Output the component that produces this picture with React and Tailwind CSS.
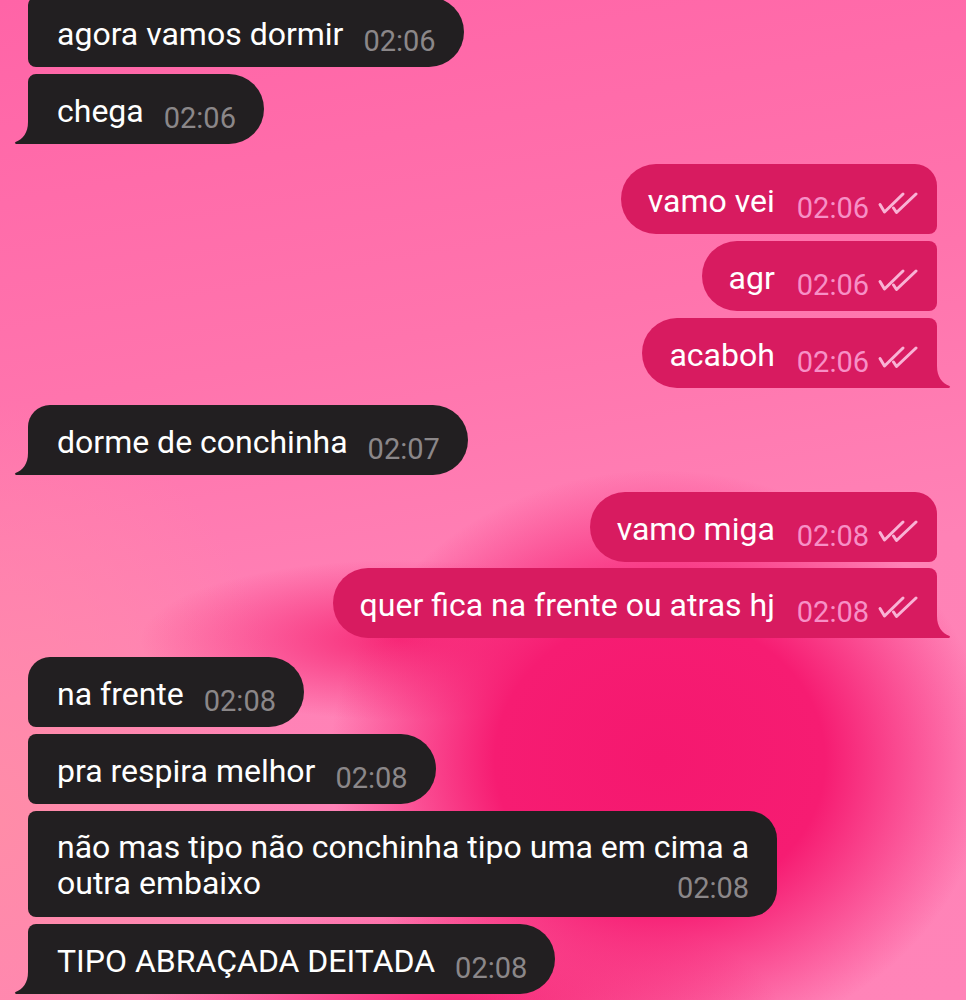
import React from "react";

const FONT = { fontFamily: "Roboto, 'Noto Sans', sans-serif" };

function Ticks() {
  return (
    <svg width="42" height="24" viewBox="0 0 42 24" className="shrink-0 translate-y-[4px]" fill="none">
      <path d="M4 13.5 L8.5 21 L27 3" stroke="#f9b3d5" strokeWidth="3" strokeLinecap="round" strokeLinejoin="round" />
      <path d="M17.5 17 L20.5 21.5 L40 3" stroke="#f9b3d5" strokeWidth="3" strokeLinecap="round" strokeLinejoin="round" />
    </svg>
  );
}

function Tail({ out, color }) {
  return (
    <svg
      width="16"
      height="22"
      viewBox="0 0 16 22"
      className={out ? "absolute -right-[14px] bottom-0 -scale-x-100" : "absolute -left-[14px] bottom-0"}
    >
      <path d="M14 0 C14 11 9 17 1.5 20 Q0 21 2 22 L16 22 L16 0 Z" fill={color} />
    </svg>
  );
}

function Bubble({ text, time, out, first, tail, className = "" }) {
  const bg = out ? "bg-[#d81b60]" : "bg-[#221f21]";
  const shape = out
    ? `rounded-l-[35px] ${first ? "rounded-tr-[22px]" : "rounded-tr-[8px]"} ${tail ? "rounded-br-none" : "rounded-br-[8px]"}`
    : `rounded-r-[35px] ${first ? "rounded-tl-[22px]" : "rounded-tl-[8px]"} ${tail ? "rounded-bl-none" : "rounded-bl-[8px]"}`;
  return (
    <div className={`flex ${out ? "justify-end" : "justify-start"} ${className}`}>
      <div className={`relative ${bg} ${shape} flex items-center h-[70px] ${out ? "pl-[27px] pr-[19px]" : "pl-[29px] pr-[28px]"}`}>
        <div className="flex items-baseline translate-y-[2px]">
          <span className="text-[32px] leading-[36px] text-white whitespace-nowrap">{text}</span>
          <span
            className={`text-[29px] leading-[36px] translate-y-[6px] whitespace-nowrap ${out ? "ml-[22px] text-[#f790c6]" : "ml-[20px] text-[#8b8789]"}`}
          >
            {time}
          </span>
        </div>
        {out && <div className="ml-[7px]"><Ticks /></div>}
        {tail && <Tail out={out} color={out ? "#d81b60" : "#221f21"} />}
      </div>
    </div>
  );
}

export default function App() {
  return (
    <div
      className="relative w-[966px] h-[1000px] overflow-hidden bg-[radial-gradient(ellipse_330px_290px_at_660px_760px,#f5186f_0%,#f61c72_50%,rgba(247,40,120,0)_100%),radial-gradient(ellipse_260px_80px_at_400px_640px,rgba(246,34,114,0.9)_0%,rgba(246,34,114,0)_100%),radial-gradient(ellipse_320px_110px_at_460px_1010px,rgba(246,30,112,0.95)_0%,rgba(246,30,112,0)_100%),radial-gradient(ellipse_300px_420px_at_0px_820px,#ff8ca8_0%,rgba(255,140,168,0)_100%),linear-gradient(170deg,#ff64a7_0%,#ff74ad_35%,#ff82b6_60%,#ff84b8_100%)]"
      style={FONT}
    >
      <div className="flex flex-col pl-[28px] pr-[29px] -mt-[3px]">
        <Bubble text="agora vamos dormir" time="02:06" />
        <Bubble text="chega" time="02:06" tail className="mt-[7px]" />

        <Bubble out first text="vamo vei" time="02:06" className="mt-[20px]" />
        <Bubble out text="agr" time="02:06" className="mt-[7px]" />
        <Bubble out text="acaboh" time="02:06" tail className="mt-[7px]" />

        <Bubble first text="dorme de conchinha" time="02:07" tail className="mt-[17px]" />

        <Bubble out first text="vamo miga" time="02:08" className="mt-[17px]" />
        <Bubble out text="quer fica na frente ou atras hj" time="02:08" tail className="mt-[6px]" />

        <Bubble first text="na frente" time="02:08" className="mt-[19px]" />
        <Bubble text="pra respira melhor" time="02:08" className="mt-[7px]" />

        <div className="flex justify-start mt-[7px]">
          <div className="bg-[#221f21] rounded-r-[28px] rounded-l-[8px] pl-[29px] pr-[28px] pt-[18px] pb-[16px]">
            <div className="text-[32px] leading-[36px] text-white whitespace-nowrap">
              não mas tipo não conchinha tipo uma em cima a
              <br />
              outra embaixo
              <span className="float-right text-[29px] leading-[36px] text-[#8b8789] translate-y-[5px]">02:08</span>
            </div>
          </div>
        </div>

        <Bubble text="TIPO ABRAÇADA DEITADA" time="02:08" tail className="mt-[7px]" />
      </div>
    </div>
  );
}
